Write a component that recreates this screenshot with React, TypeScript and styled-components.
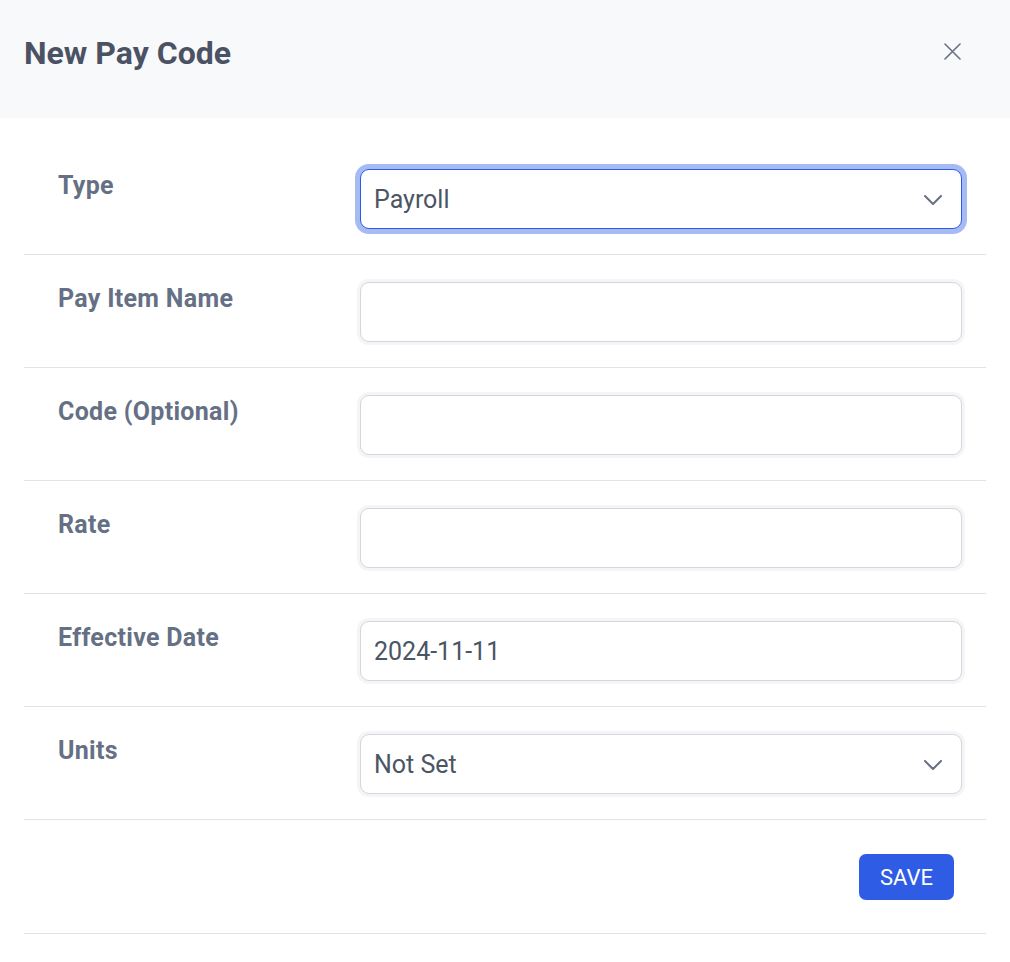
import styled, { createGlobalStyle, css } from 'styled-components'

const GlobalStyle = createGlobalStyle`
  html, body {
    margin: 0;
    padding: 0;
    background: #fff;
  }
  body {
    font-family: Roboto, "Liberation Sans", sans-serif;
  }
  * {
    box-sizing: border-box;
  }
`

const Modal = styled.div`
  width: 1010px;
  background: #fff;
`

const Header = styled.header`
  height: 118px;
  background: #f8f9fb;
  display: flex;
  align-items: center;
  justify-content: space-between;
  padding: 0 49px 12px 24px;
`

const Title = styled.h2`
  margin: 0;
  font-size: 32px;
  font-weight: 700;
  color: #4a5264;
`

const CloseButton = styled.button`
  border: none;
  background: none;
  padding: 0;
  margin-bottom: 4px;
  width: 17px;
  height: 17px;
  display: flex;
  cursor: pointer;
  color: #6b7280;
`

const Body = styled.div`
  padding: 24px 24px 0 24px;
`

const Row = styled.div`
  display: grid;
  grid-template-columns: 302px 1fr;
  align-items: start;
  padding: 27px 24px 25px 34px;
  border-bottom: 1px solid #e1e3e7;
`

const Label = styled.label`
  font-size: 25px;
  font-weight: 700;
  line-height: 33px;
  letter-spacing: 0.3px;
  color: #667085;
`

const FieldWrap = styled.div`
  position: relative;
`

const fieldBase = css<{ $focused?: boolean }>`
  width: 100%;
  height: 60px;
  padding: 0 48px 0 13px;
  font-family: Roboto, "Liberation Sans", sans-serif;
  font-size: 25px;
  color: #4b5563;
  background: #fff;
  border: 1px solid #d3d6dc;
  border-radius: 9px;
  box-shadow: 0 0 0 3px #f4f5f7;
  outline: none;
  appearance: none;

  ${(p) =>
    p.$focused &&
    css`
      border-color: #2d5be3;
      box-shadow: 0 0 0 5px #a6baf4;
    `}
`

const TextField = styled.input<{ $focused?: boolean }>`
  ${fieldBase}
`

const SelectField = styled.select<{ $focused?: boolean }>`
  ${fieldBase}
`

const Chevron = styled.svg`
  position: absolute;
  right: 20px;
  top: 26px;
  width: 18px;
  height: 10px;
  pointer-events: none;
`

const Footer = styled.div`
  display: flex;
  justify-content: flex-end;
  padding: 34px 32px 33px;
  border-bottom: 1px solid #e1e3e7;
`

const SaveButton = styled.button`
  height: 46px;
  padding: 0 21px;
  border: none;
  border-radius: 7px;
  background: #2f5ce4;
  color: #fff;
  font-family: Roboto, "Liberation Sans", sans-serif;
  font-size: 22px;
  font-weight: 400;
  cursor: pointer;
`

const ChevronIcon = () => (
  <Chevron viewBox="0 0 18 10" fill="none">
    <path d="M1 1l8 8 8-8" stroke="#667085" strokeWidth="2" strokeLinecap="round" strokeLinejoin="round" />
  </Chevron>
)

function SelectInput({ value, options, focused }: { value: string; options: string[]; focused?: boolean }) {
  return (
    <FieldWrap>
      <SelectField $focused={focused} value={value} onChange={() => {}}>
        {options.map((o) => (
          <option key={o}>{o}</option>
        ))}
      </SelectField>
      <ChevronIcon />
    </FieldWrap>
  )
}

const fields = [
  { label: 'Pay Item Name', value: '' },
  { label: 'Code (Optional)', value: '' },
  { label: 'Rate', value: '' },
  { label: 'Effective Date', value: '2024-11-11' },
]

export default function App() {
  return (
    <>
      <GlobalStyle />
      <Modal>
        <Header>
          <Title>New Pay Code</Title>
          <CloseButton aria-label="Close">
            <svg width="17" height="17" viewBox="0 0 17 17" fill="none">
              <path d="M1 1l15 15M16 1L1 16" stroke="currentColor" strokeWidth="1.6" strokeLinecap="round" />
            </svg>
          </CloseButton>
        </Header>
        <Body>
          <Row>
            <Label>Type</Label>
            <SelectInput value="Payroll" options={['Payroll', 'Deduction', 'Reimbursement']} focused />
          </Row>
          {fields.map((f) => (
            <Row key={f.label}>
              <Label>{f.label}</Label>
              <FieldWrap>
                <TextField type="text" value={f.value} onChange={() => {}} />
              </FieldWrap>
            </Row>
          ))}
          <Row>
            <Label>Units</Label>
            <SelectInput value="Not Set" options={['Not Set', 'Hours', 'Days']} />
          </Row>
          <Footer>
            <SaveButton>SAVE</SaveButton>
          </Footer>
        </Body>
      </Modal>
    </>
  )
}
